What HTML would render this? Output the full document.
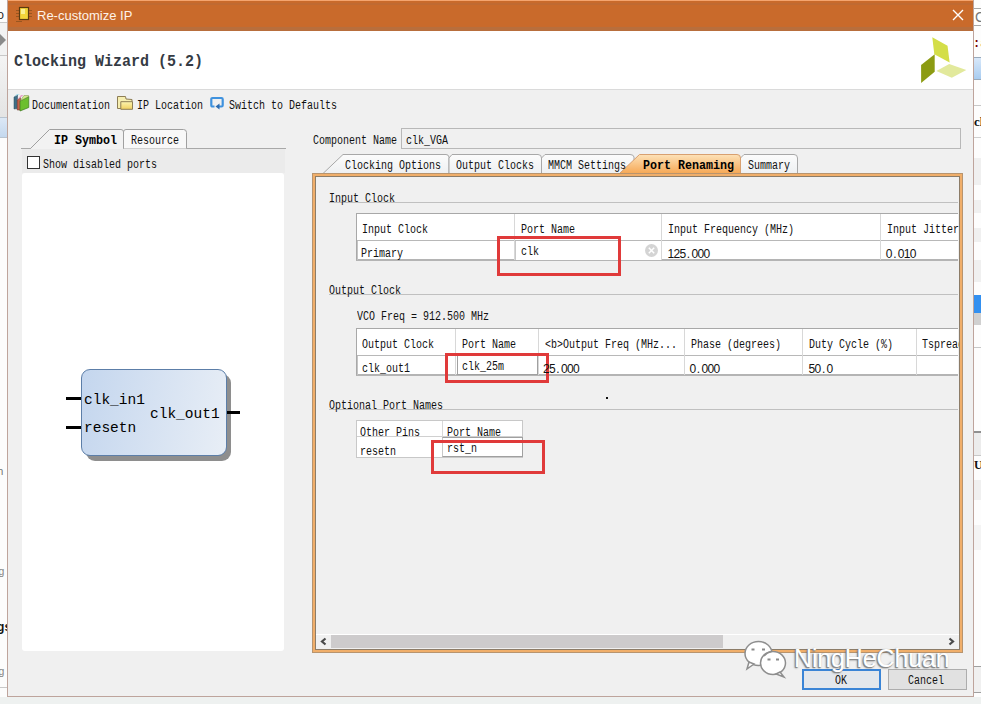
<!DOCTYPE html>
<html><head><meta charset="utf-8"><style>
*{margin:0;padding:0;box-sizing:border-box}
html,body{width:981px;height:704px;overflow:hidden;background:#f0f0f0;position:relative}
body{font-family:"Liberation Mono",monospace;color:#000}
.a{position:absolute}
.m{font-family:"Liberation Mono",monospace;font-size:12px;white-space:nowrap;line-height:12px;color:#111;transform:scaleX(0.8333);transform-origin:0 0}
.mb{font-weight:bold;color:#000;transform:scaleX(0.9722)}
.dd{font-family:'Liberation Sans',sans-serif;font-size:12px;line-height:12px;white-space:nowrap;color:#111}
.dc{display:inline-block;width:6px;text-align:center}
.sym{font-family:"Liberation Mono",monospace;font-size:14.5px;line-height:16px;white-space:nowrap;color:#000}
</style></head><body>
<div class="a" style="left:0px;top:0px;width:8px;height:704px;background:#fcfcfc"></div>
<div class="a" style="left:-3px;top:10px;font-family:'Liberation Mono',monospace;font-size:12px;line-height:12px;color:#222">o</div>
<div class="a" style="left:0px;top:22px;width:8px;height:1px;background:#c8c8c8"></div>
<div class="a" style="left:0px;top:23px;width:8px;height:32px;background:#f2f2f2"></div>
<svg class="a" style="left:0;top:34px" width="8" height="12"><polygon points="0,0 6,6 0,12" fill="#8a8a8a"/></svg>
<div class="a" style="left:0px;top:55px;width:8px;height:1px;background:#c8c8c8"></div>
<div class="a" style="left:0px;top:56px;width:8px;height:61px;background:linear-gradient(#f4f4f4,#e4e4e4)"></div>
<div class="a" style="left:0px;top:117px;width:8px;height:1px;background:#b8c4d0"></div>
<div class="a" style="left:0px;top:118px;width:8px;height:19px;background:linear-gradient(#dce8f6,#c4d8ee)"></div>
<div class="a" style="left:0px;top:137px;width:8px;height:1px;background:#b8c4d0"></div>
<div class="a" style="left:-3px;top:466px;font-family:'Liberation Mono',monospace;font-size:11px;line-height:12px;color:#777">n</div>
<div class="a" style="left:-2px;top:566px;font-family:'Liberation Mono',monospace;font-size:11px;line-height:12px;color:#888">g</div>
<div class="a" style="left:-3px;top:622px;font-family:'Liberation Mono',monospace;font-size:12px;font-weight:bold;line-height:12px;color:#111">gs</div>
<div class="a" style="left:-2px;top:666px;font-family:'Liberation Mono',monospace;font-size:11px;line-height:12px;color:#888">g</div>
<div class="a" style="left:0px;top:687px;width:8px;height:1px;background:#c8c8c8"></div>
<div class="a" style="left:973px;top:0px;width:8px;height:704px;background:#fdfdfd"></div>
<div class="a" style="left:974px;top:8px;width:7px;height:18px;background:#fff;border-top:1px solid #a8a8a8;border-bottom:1px solid #a8a8a8"></div>
<div class="a" style="left:975px;top:10px;font-family:'Liberation Sans',sans-serif;font-size:14px;line-height:14px;color:#777">C</div>
<div class="a" style="left:973px;top:38px;font-family:'Liberation Mono',monospace;font-size:12px;font-weight:bold;line-height:12px;color:#700">:a</div>
<div class="a" style="left:974px;top:57px;width:7px;height:23px;background:linear-gradient(#d8e8fa,#a8ccf0);border-top:1px solid #9ab;border-bottom:1px solid #9ab"></div>
<div class="a" style="left:974px;top:105px;width:7px;height:1px;background:#c8c8c8"></div>
<div class="a" style="left:974px;top:115px;font-family:'Liberation Serif',serif;font-size:13px;font-weight:bold;line-height:13px;color:#111">cl</div>
<div class="a" style="left:974px;top:137px;width:7px;height:1px;background:#d0d0d0"></div>
<div class="a" style="left:974px;top:158px;width:7px;height:27px;background:#f0f0f0"></div>
<div class="a" style="left:974px;top:200px;width:7px;height:13px;background:#f0f0f0"></div>
<div class="a" style="left:974px;top:228px;width:7px;height:14px;background:#f0f0f0"></div>
<div class="a" style="left:974px;top:260px;width:7px;height:22px;background:#f0f0f0"></div>
<div class="a" style="left:974px;top:295px;width:7px;height:18px;background:#3390f0"></div>
<div class="a" style="left:974px;top:313px;width:7px;height:12px;background:#d0d0d0"></div>
<div class="a" style="left:974px;top:347px;width:7px;height:1px;background:#c8c8c8"></div>
<div class="a" style="left:974px;top:431px;width:7px;height:2px;background:#909090"></div>
<div class="a" style="left:974px;top:433px;width:7px;height:22px;background:#ececec"></div>
<div class="a" style="left:974px;top:455px;width:7px;height:1px;background:#c8c8c8"></div>
<div class="a" style="left:974px;top:459px;font-family:'Liberation Serif',serif;font-size:12px;font-weight:bold;line-height:12px;color:#111">U</div>
<div class="a" style="left:974px;top:480px;width:7px;height:20px;background:#f0f0f0"></div>
<div class="a" style="left:974px;top:525px;width:7px;height:25px;background:#f4f4f4"></div>
<div class="a" style="left:974px;top:666px;width:7px;height:1px;background:#a0a0a0"></div>
<div class="a" style="left:974px;top:667px;width:7px;height:25px;background:#f0f0f0"></div>
<div class="a" style="left:974px;top:692px;width:7px;height:1px;background:#a0a0a0"></div>
<div class="a" style="left:0px;top:697px;width:981px;height:7px;background:#eef1f0"></div>
<div class="a" style="left:7px;top:0px;width:967px;height:697px;background:#f0f0f0;border:1px solid #bea49c;border-top:none"></div>
<div class="a" style="left:8px;top:0px;width:965px;height:31px;background:#c96a2b"></div>
<div class="a" style="left:8px;top:0px;width:965px;height:1px;background:#f4a46e"></div>
<div class="a" style="left:8px;top:3px;width:965px;height:2px;background:#c06a32"></div>
<div class="a" style="left:8px;top:26px;width:965px;height:1px;background:#c86a2c"></div>
<div class="a" style="left:8px;top:27px;width:965px;height:4px;background:#b86e3c"></div>
<svg class="a" style="left:14px;top:5px" width="20" height="20" viewBox="0 0 20 20">
<g fill="#7a4a1a" opacity="0.6"><rect x="2" y="5" width="3" height="1"/><rect x="2" y="8" width="3" height="1"/><rect x="2" y="11" width="3" height="1"/><rect x="15" y="5" width="3" height="1"/><rect x="15" y="8" width="3" height="1"/><rect x="15" y="11" width="3" height="1"/><rect x="2" y="16" width="6" height="1"/></g>
<rect x="5.5" y="2.5" width="9" height="12" fill="#f3d53a" stroke="#5a3a10" stroke-width="1.2"/>
<rect x="7" y="4" width="4" height="5" fill="#faf090"/>
</svg>
<div class="a" style="left:37px;top:8px;color:#fff3e8;font-family:'Liberation Sans',sans-serif;font-size:13px;line-height:16px;white-space:nowrap">Re-customize IP</div>
<svg class="a" style="left:952px;top:9px" width="12" height="12" viewBox="0 0 12 12"><path d="M1 1L11 11M11 1L1 11" stroke="#fff" stroke-width="1.4"/></svg>
<div class="a" style="left:8px;top:31px;width:965px;height:59px;background:#fff"></div>
<div class="a" style="left:8px;top:89px;width:965px;height:1px;background:#dadada"></div>
<div class="a" style="left:14px;top:52px;font-family:'Liberation Mono',monospace;font-weight:bold;font-size:17px;transform:scaleX(0.8824);transform-origin:0 0;line-height:20px;color:#353b44;white-space:nowrap">Clocking Wizard (5.2)</div>
<svg class="a" style="left:910px;top:30px" width="60" height="60" viewBox="910 30 60 60">
<polygon points="932.3,37.2 947.5,45.8 949.6,62.4 934.3,54.3" fill="#d4de48"/>
<polygon points="921.1,65 934.7,54.3 934.7,71.8 921.1,82.9" fill="#8c9b12"/>
<polygon points="936.4,70.9 949.2,64.1 966.3,70.1 951.8,77.7" fill="#e2e99c"/>
</svg>
<svg class="a" style="left:13px;top:92px" width="18" height="20" viewBox="0 0 18 20">
<polygon points="1,5 4.5,3 4.5,16.5 1,17" fill="#3f6f86" stroke="#2a4a5a" stroke-width="0.5"/>
<polygon points="1,5 4,2 7,2 4.5,3" fill="#a0d8e8"/>
<polygon points="4.2,8 7.5,5.5 7.5,18 4.2,18" fill="#c45e48" stroke="#6a2a20" stroke-width="0.5"/>
<polygon points="4.2,8 8,3 10.5,3 7.5,5.5" fill="#e8a0c8"/>
<polygon points="7,9 15.75,4.5 15.75,15.5 7,19" fill="#6cbf2e" stroke="#3d7a20" stroke-width="0.7"/>
<polygon points="7,9 11,3.5 15.5,3.5 15.75,4.5" fill="#d4e68c" stroke="#5a7a30" stroke-width="0.4"/>
</svg>
<svg class="a" style="left:116px;top:95px" width="18" height="16" viewBox="0 0 18 16">
<defs><linearGradient id="fg" x1="0" y1="0" x2="0" y2="1"><stop offset="0" stop-color="#fcf4b0"/><stop offset="1" stop-color="#f0d060"/></linearGradient></defs>
<path d="M1.5 1.5 L9.5 1.5 L10 4 L16 4.5 L16 13.5 L1.5 13.5Z" fill="#f6eeb0" stroke="#8d7d55" stroke-width="1"/>
<path d="M4.8 6.7 L16.5 6.7 L16.5 14.3 L4.8 14.3Z" fill="url(#fg)" stroke="#8d7d55" stroke-width="1"/>
</svg>
<svg class="a" style="left:209px;top:96px" width="16" height="15" viewBox="0 0 16 15">
<path d="M5.5 10.5 L3.5 10.5 Q2.3 10.5 2.3 9.3 L2.3 3.2 Q2.3 2 3.5 2 L12.5 2 Q13.7 2 13.7 3.2 L13.7 9.3 Q13.7 10.5 12.5 10.5 L10 10.5" fill="none" stroke="#3f92de" stroke-width="2.2"/>
<polygon points="6.5,10.5 10.5,7.5 10.5,13.5" fill="#2a6ab0"/>
</svg>
<div class="a" style="left:21px;top:148px;width:265px;height:1px;background:#a8a8a8"></div>
<svg class="a" style="left:20px;top:128px" width="170" height="22" viewBox="20 128 170 22">
<path d="M30.5 148.5 L49.5 129.5 L121 129.5 Q123.5 129.5 123.5 132 L123.5 148.5" fill="#f2f2f2" stroke="#a0a0a0" stroke-width="1"/>
<path d="M123.5 148.5 L123.5 132 Q123.5 129.5 126 129.5 L183.5 129.5 Q186.5 129.5 186.5 132.5 L186.5 148.5" fill="#f8f8f8" stroke="#a0a0a0" stroke-width="1"/>
<rect x="31" y="148" width="92" height="1" fill="#f2f2f2"/>
</svg>
<div class="a" style="left:22px;top:149px;width:263px;height:24px;background:#ebebeb"></div>
<div class="a" style="left:27px;top:156px;width:13px;height:13px;background:#fff;border:1px solid #333"></div>
<div class="a" style="left:22px;top:173px;width:262px;height:478px;background:#fff;border-radius:3px"></div>
<div class="a" style="left:86px;top:374px;width:145px;height:87px;background:#8e8e8e;border-radius:9px"></div>
<div class="a" style="left:81px;top:369px;width:146px;height:87px;background:linear-gradient(100deg,#c4d6ee 0%,#d6e2f2 50%,#e8eef6 100%);border:1px solid #5c7ea8;border-radius:9px"></div>
<div class="a" style="left:66px;top:397px;width:15px;height:3px;background:#000"></div>
<div class="a" style="left:66px;top:426px;width:15px;height:3px;background:#000"></div>
<div class="a" style="left:227px;top:411px;width:13px;height:3px;background:#000"></div>
<div class="a sym" style="left:84px;top:392px">clk_in1</div>
<div class="a sym" style="left:84px;top:420px">resetn</div>
<div class="a sym" style="left:150px;top:406px">clk_out1</div>
<div class="a" style="left:401px;top:128px;width:560px;height:21px;background:#f0f0f0;border:1px solid #b8b8b8"></div>
<svg class="a" style="left:315px;top:150px" width="490" height="27" viewBox="315 150 490 27">
<defs>
<linearGradient id="tg" x1="0" y1="0" x2="0" y2="1"><stop offset="0" stop-color="#fcfcfc"/><stop offset="1" stop-color="#eef0f2"/></linearGradient>
<linearGradient id="og" x1="0" y1="0" x2="0" y2="1"><stop offset="0" stop-color="#fde2b8"/><stop offset="1" stop-color="#f6a652"/></linearGradient>
</defs>
<path d="M323 173.5 L343 154.5 L446 154.5 Q448.5 154.5 449 157 L449 173.5" fill="url(#tg)" stroke="#a8a8a8"/>
<path d="M449 173.5 L449 158 L452 154.5 L538 154.5 Q541.5 154.5 541.5 158 L541.5 173.5" fill="url(#tg)" stroke="#a8a8a8"/>
<path d="M541.5 173.5 L541.5 158 L545 154.5 L630 154.5 Q633.5 154.5 634 157 L634 173.5" fill="url(#tg)" stroke="#a8a8a8"/>
<path d="M740.5 173.5 L740.5 158 L744 154.5 L794 154.5 Q797.5 154.5 797.5 158 L797.5 173.5" fill="url(#tg)" stroke="#a8a8a8"/>
<path d="M619 174 L639.5 154.5 L737 154.5 Q740.5 154.5 740.5 158 L740.5 174Z" fill="url(#og)" stroke="#d8a070"/>
</svg>
<div class="a" style="left:312px;top:173px;width:651px;height:480px;background:#f0f0f0"></div>
<div class="a" style="left:329px;top:202px;width:629px;height:1px;background:#c0c0c0"></div>
<div class="a" style="left:356px;top:213px;width:602px;height:48px;background:#fff;border-top:1px solid #a8a8a8;border-left:1px solid #a8a8a8;border-bottom:2px solid #b4b4b4"></div>
<div class="a" style="left:357px;top:240px;width:601px;height:1px;background:#b8b8b8"></div>
<div class="a" style="left:357px;top:241px;width:1px;height:19px;background:#c4c4c4"></div>
<div class="a" style="left:514px;top:214px;width:1px;height:46px;background:#d8d8d8"></div>
<div class="a" style="left:661px;top:214px;width:1px;height:46px;background:#d8d8d8"></div>
<div class="a" style="left:880px;top:214px;width:1px;height:46px;background:#d8d8d8"></div>
<div class="a" style="left:515px;top:241px;width:146px;height:19px;background:#fff;border-left:1px solid #c8c8c8"></div>
<svg class="a" style="left:644px;top:243px" width="15" height="15" viewBox="0 0 15 15"><circle cx="7.5" cy="7.5" r="6.5" fill="#d4d4d4"/><path d="M4.8 4.8L10.2 10.2M10.2 4.8L4.8 10.2" stroke="#fff" stroke-width="1.5"/></svg>
<div class="a" style="left:329px;top:294px;width:629px;height:1px;background:#c0c0c0"></div>
<div class="a" style="left:356px;top:328px;width:602px;height:48px;background:#fff;border-top:1px solid #a8a8a8;border-left:1px solid #a8a8a8;border-bottom:2px solid #b4b4b4"></div>
<div class="a" style="left:357px;top:355px;width:601px;height:1px;background:#b8b8b8"></div>
<div class="a" style="left:357px;top:356px;width:1px;height:19px;background:#c4c4c4"></div>
<div class="a" style="left:455px;top:329px;width:1px;height:46px;background:#d8d8d8"></div>
<div class="a" style="left:538px;top:329px;width:1px;height:46px;background:#d8d8d8"></div>
<div class="a" style="left:684px;top:329px;width:1px;height:46px;background:#d8d8d8"></div>
<div class="a" style="left:802px;top:329px;width:1px;height:46px;background:#d8d8d8"></div>
<div class="a" style="left:916px;top:329px;width:1px;height:46px;background:#d8d8d8"></div>
<div class="a" style="left:457px;top:355px;width:81px;height:20px;background:#fff;border:1px solid #a0a0a0"></div>
<div class="a" style="left:606px;top:397px;width:2px;height:2px;background:#111"></div>
<div class="a" style="left:329px;top:409px;width:629px;height:1px;background:#c0c0c0"></div>
<div class="a" style="left:356px;top:420px;width:167px;height:38px;background:#fff;border:1px solid #c8c8c8"></div>
<div class="a" style="left:357px;top:436px;width:165px;height:1px;background:#d0d0d0"></div>
<div class="a" style="left:442px;top:421px;width:1px;height:36px;background:#d8d8d8"></div>
<div class="a" style="left:442px;top:437px;width:81px;height:20px;background:#fff;border:1px solid #a0a0a0;border-left-color:#c8c8c8"></div>
<div class="a" style="left:497px;top:236px;width:124px;height:40px;border:3px solid #e03a3a"></div>
<div class="a" style="left:445px;top:353px;width:104px;height:30px;border:3px solid #e03a3a"></div>
<div class="a" style="left:431px;top:440px;width:114px;height:34px;border:3px solid #e03a3a"></div>
<div class="a" style="left:316px;top:634px;width:644px;height:15px;background:#f0f0f0;border-top:1px solid #fff"></div>
<div class="a" style="left:331px;top:635px;width:392px;height:13px;background:#cdcbcc"></div>
<svg class="a" style="left:318px;top:636px" width="12" height="11" viewBox="0 0 12 11"><path d="M7.5 2.5L4 5.5L7.5 8.5" stroke="#4a4a4a" stroke-width="2.2" fill="none"/></svg>
<svg class="a" style="left:945px;top:636px" width="12" height="11" viewBox="0 0 12 11"><path d="M4.5 2.5L8 5.5L4.5 8.5" stroke="#4a4a4a" stroke-width="2.2" fill="none"/></svg>
<div class="a" style="left:802px;top:669px;width:79px;height:21px;background:#e3e7ec;border:2px solid #3a84d6"></div>
<div class="a" style="left:888px;top:669px;width:79px;height:21px;background:#e1e1e1;border:1px solid #adadad"></div>
<div class="a m" style="left:32.0px;top:100.0px;">Documentation</div>
<div class="a m" style="left:137.0px;top:100.0px;">IP Location</div>
<div class="a m" style="left:228.6px;top:100.0px;">Switch to Defaults</div>
<div class="a m mb" style="left:54.0px;top:135.0px;">IP Symbol</div>
<div class="a m" style="left:130.6px;top:135.0px;">Resource</div>
<div class="a m" style="left:43.0px;top:159.0px;">Show disabled ports</div>
<div class="a m" style="left:312.7px;top:135.0px;">Component Name</div>
<div class="a m" style="left:405.7px;top:135.0px;">clk_VGA</div>
<div class="a m" style="left:345.0px;top:160.0px;">Clocking Options</div>
<div class="a m" style="left:456.0px;top:160.0px;">Output Clocks</div>
<div class="a m" style="left:548.0px;top:160.0px;">MMCM Settings</div>
<div class="a m mb" style="left:642.6px;top:160.0px;">Port Renaming</div>
<div class="a m" style="left:747.6px;top:160.0px;">Summary</div>
<div class="a m" style="left:329.0px;top:193.0px;">Input Clock</div>
<div class="a m" style="left:362.0px;top:224.0px;">Input Clock</div>
<div class="a m" style="left:520.6px;top:224.0px;">Port Name</div>
<div class="a m" style="left:667.8px;top:224.0px;">Input Frequency (MHz)</div>
<div class="a m" style="left:886.8px;top:224.0px;">Input Jitter</div>
<div class="a m" style="left:361.0px;top:248.0px;">Primary</div>
<div class="a m" style="left:520.6px;top:246.0px;">clk</div>
<div class="a dd" style="left:667.4px;top:248.0px;"><span class="dc">1</span><span class="dc">2</span><span class="dc">5</span><span class="dc">.</span><span class="dc">0</span><span class="dc">0</span><span class="dc">0</span></div>
<div class="a dd" style="left:885.8px;top:248.0px;"><span class="dc">0</span><span class="dc">.</span><span class="dc">0</span><span class="dc">1</span><span class="dc">0</span></div>
<div class="a m" style="left:328.6px;top:284.7px;">Output Clock</div>
<div class="a m" style="left:357.2px;top:311.0px;">VCO Freq = 912.500 MHz</div>
<div class="a m" style="left:361.6px;top:338.5px;">Output Clock</div>
<div class="a m" style="left:461.9px;top:338.5px;">Port Name</div>
<div class="a m" style="left:544.5px;top:338.5px;">&lt;b&gt;Output Freq (MHz...</div>
<div class="a m" style="left:690.5px;top:338.5px;">Phase (degrees)</div>
<div class="a m" style="left:808.6px;top:338.5px;">Duty Cycle (%)</div>
<div class="a m" style="left:921.5px;top:338.5px;">Tspread</div>
<div class="a m" style="left:361.6px;top:363.0px;">clk_out1</div>
<div class="a m" style="left:461.9px;top:360.6px;">clk_25m</div>
<div class="a dd" style="left:542.9px;top:363.0px;"><span class="dc">2</span><span class="dc">5</span><span class="dc">.</span><span class="dc">0</span><span class="dc">0</span><span class="dc">0</span></div>
<div class="a dd" style="left:689.4px;top:363.0px;"><span class="dc">0</span><span class="dc">.</span><span class="dc">0</span><span class="dc">0</span><span class="dc">0</span></div>
<div class="a dd" style="left:808.6px;top:363.0px;"><span class="dc">5</span><span class="dc">0</span><span class="dc">.</span><span class="dc">0</span></div>
<div class="a m" style="left:328.6px;top:400.3px;">Optional Port Names</div>
<div class="a m" style="left:359.6px;top:427.3px;">Other Pins</div>
<div class="a m" style="left:446.7px;top:427.3px;">Port Name</div>
<div class="a m" style="left:359.6px;top:445.6px;">resetn</div>
<div class="a m" style="left:446.7px;top:443.2px;">rst_n</div>
<div class="a m" style="left:834.7px;top:675.4px;">OK</div>
<div class="a m" style="left:908.3px;top:675.4px;">Cancel</div>
<div class="a" style="left:959px;top:330px;width:14px;height:30px;background:#f0f0f0"></div>
<div class="a" style="left:312px;top:173px;width:651px;height:480px;border:1px solid #b8946e;box-shadow:inset 0 0 0 2px #f0ae6a,inset 0 0 0 3px #8c7c68"></div>
<svg class="a" style="left:740px;top:636px" width="50" height="44" viewBox="0 0 50 44">
<g stroke="#8e8e8e" stroke-width="1.5" fill="#ffffff">
<ellipse cx="18.5" cy="17.5" rx="13.5" ry="12"/>
<path d="M9 26 L7 33 L14 28Z"/>
<ellipse cx="33" cy="27" rx="12.5" ry="11.5"/>
<path d="M40 36 L44 41 L36 38Z"/>
</g>
<path d="M24 20 A12.5 11.5 0 0 1 31.5 15.6" stroke="#8e8e8e" stroke-width="1.5" fill="none"/>
<g fill="#8a8a8a"><rect x="11.5" y="12.5" width="3" height="2"/><rect x="22" y="12.5" width="3" height="2"/><rect x="27.5" y="22.5" width="3" height="2"/><rect x="36" y="22.5" width="3" height="2"/></g>
</svg>
<div class="a" style="left:794px;top:643px;font-family:'Liberation Sans',sans-serif;font-size:25px;line-height:30px;color:#fff;text-shadow:-1px 1px 0 #8a8a8a,-1px 1px 2px #555;white-space:nowrap;letter-spacing:-0.15px">NingHeChuan</div>
</body></html>
